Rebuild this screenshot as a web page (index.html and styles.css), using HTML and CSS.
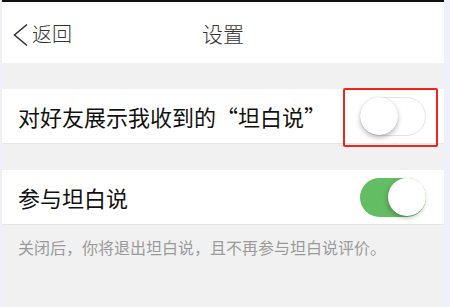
FILE: index.html
```html
<!DOCTYPE html>
<html lang="zh">
<head>
<meta charset="utf-8">
<link rel="stylesheet" href="styles.css">
</head>
<body>
<div class="screen">
  <div class="topbar"></div>
  <div class="nav">
    <div class="back">
      <svg class="chev" width="18" height="24" viewBox="0 0 18 24"><polyline points="15,1.5 2.5,12 15,22.5" fill="none" stroke="#333" stroke-width="1.6"/></svg>
      <span>返回</span>
    </div>
    <div class="title">设置</div>
  </div>
  <div class="gap"></div>
  <div class="row">
    <span class="label">对好友展示我收到的“坦白说”</span>
    <div class="toggle off"><div class="knob"></div></div>
    <div class="mark"></div>
  </div>
  <div class="gap"></div>
  <div class="row">
    <span class="label">参与坦白说</span>
    <div class="toggle on"><div class="knob"></div></div>
  </div>
  <div class="note">关闭后，你将退出坦白说，且不再参与坦白说评价。</div>
</div>
</body>
</html>
```
FILE: styles.css
```css
html, body {
  margin: 0;
  padding: 0;
  background: #eef2f8;
  height: 307px;
  overflow: hidden;
}
.screen {
  margin-left: 2px;
  width: 442px;
  height: 307px;
  background: #f1f1f1;
  font-family: "Noto Sans CJK SC", sans-serif;
}
.topbar {
  height: 2px;
  background: #111;
}
.nav {
  position: relative;
  height: 61px;
  background: #fff;
  display: flex;
  align-items: center;
  justify-content: center;
}
.back {
  position: absolute;
  left: 10px;
  top: 0;
  height: 61px;
  display: flex;
  align-items: center;
  gap: 2px;
  font-size: 20px;
  font-weight: 300;
  color: #333;
}
.back span {
  margin-top: 2px;
}
.chev {
  margin-top: 4px;
}
.title {
  font-size: 21px;
  font-weight: 300;
  color: #333;
  margin-top: 1px;
}
.gap {
  height: 26px;
}
.row {
  position: relative;
  height: 55px;
  background: #fff;
  display: flex;
  align-items: center;
  justify-content: space-between;
  padding: 0 18px 0 16px;
  border-bottom: 1px solid #e6e6e6;
  box-sizing: border-box;
}
.label {
  font-size: 22px;
  color: #111;
}
.toggle {
  position: relative;
  width: 66px;
  height: 39px;
  border-radius: 20px;
  box-sizing: border-box;
}
.toggle.off {
  background: #fff;
  border: 1.5px solid #e4e4e4;
}
.toggle.on {
  background: #62bd63;
}
.knob {
  position: absolute;
  top: 0;
  width: 38px;
  height: 38px;
  border-radius: 50%;
  background: #fff;
  box-sizing: border-box;
}
.toggle.off .knob {
  left: -1px;
  top: -1px;
  box-shadow: 0 3px 5px rgba(0,0,0,0.25), 0 0 1px rgba(0,0,0,0.2);
}
.toggle.on .knob {
  right: 0.5px;
  top: 0.5px;
  box-shadow: -1px 2px 4px rgba(0,0,0,0.25);
}
.mark {
  position: absolute;
  left: 341px;
  top: -1px;
  width: 95px;
  height: 59px;
  border: 2.5px solid #f3221b;
  border-radius: 2px;
  box-sizing: border-box;
}
.note {
  padding: 10px 16px 0 16px;
  font-size: 16px;
  color: #9a9a9a;
}
```
